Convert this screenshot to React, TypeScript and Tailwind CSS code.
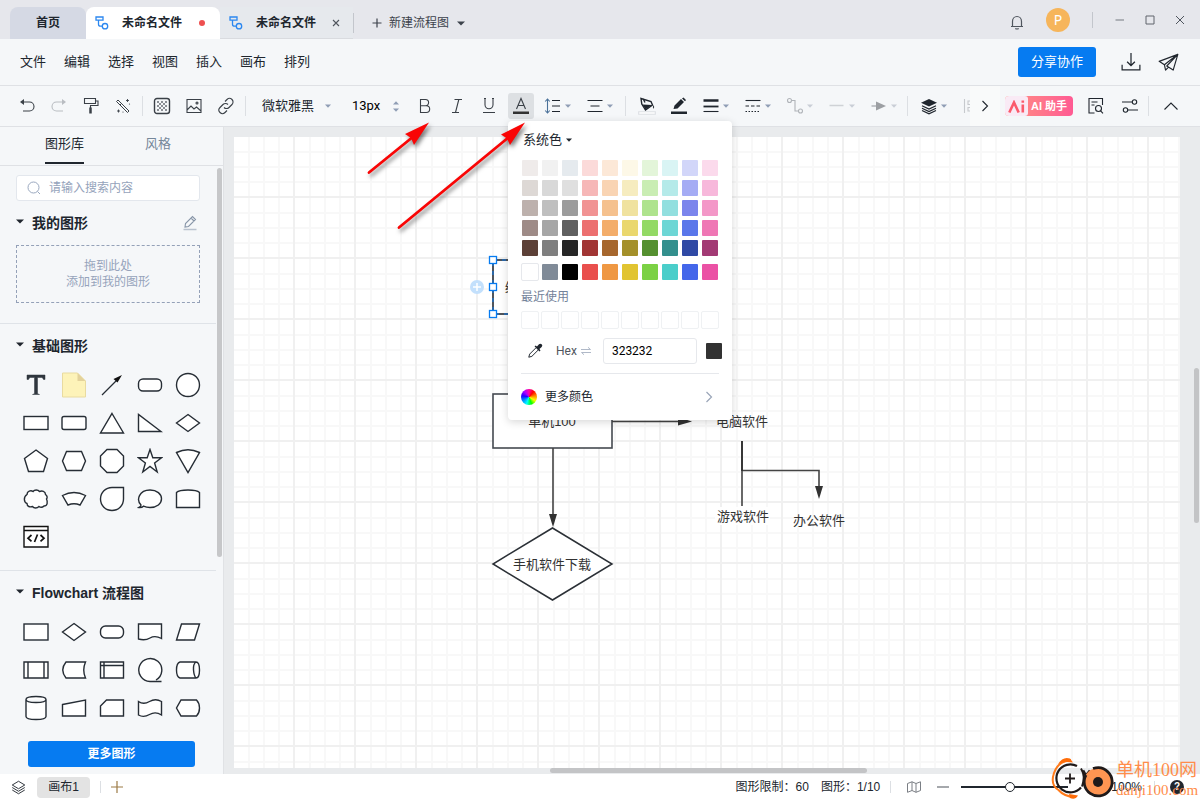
import React, { useState } from 'react';
import clsx from 'clsx';

interface IconProps {
  children: React.ReactNode;
  size?: number;
  className?: string;
}

// Toolbar icons are all drawn on an 18px box
function Icon({ children, size = 18, className }: IconProps) {
  return (
    <svg
      width={size}
      height={size}
      viewBox="0 0 18 18"
      fill="none"
      stroke="currentColor"
      strokeWidth="1.1"
      className={clsx('shrink-0', className)}
      aria-hidden="true"
    >
      {children}
    </svg>
  );
}

function Caret({ className }: { className?: string }) {
  return (
    <svg width="6" height="4" viewBox="0 0 6 4" className={clsx('shrink-0', className)} aria-hidden="true">
      <path d="M0 0.5h6L3 3.8z" fill="currentColor" />
    </svg>
  );
}

function Divider({ className }: { className?: string }) {
  return <div className={clsx('w-px shrink-0', className)} />;
}

interface ToolProps {
  label: string;
  children: React.ReactNode;
  disabled?: boolean;
}

function Tool({ label, children, disabled }: ToolProps) {
  return (
    <button
      aria-label={label}
      disabled={disabled}
      className={clsx('flex items-center justify-center w-8 h-8 shrink-0', disabled ? 'text-[#b9bdc2]' : 'text-[#3a4047]')}
    >
      {children}
    </button>
  );
}

function MenuTool({ label, children, disabled }: ToolProps) {
  return (
    <button
      aria-label={label}
      disabled={disabled}
      className={clsx('flex items-center gap-[3px] shrink-0', disabled ? 'text-[#b0b4b9]' : 'text-[#20262e]')}
    >
      <Icon>{children}</Icon>
      <Caret className={disabled ? 'text-[#c9ced6]' : 'text-[#8f9db5]'} />
    </button>
  );
}

function FlowIcon() {
  return (
    <svg width="14" height="14" viewBox="0 0 14 14" fill="none" stroke="#2b87f0" strokeWidth="1.3" aria-hidden="true">
      <path d="M1 1h7v3.200H1zM3.500 4.200v4q0 2 2 2h1.500" />
      <circle cx="10" cy="10.200" r="2.700" />
    </svg>
  );
}

function TitleBar() {
  return (
    <header className="flex items-end h-[39px] shrink-0 bg-[#e6e7ec] pl-[10px] text-xs text-[#20262e]">
      <button className="w-[76px] h-8 rounded-t-lg bg-[#d5d9e4] font-bold">首页</button>
      <div className="flex items-center w-[134px] h-8 rounded-t-lg bg-white pl-[9px] font-bold">
        <FlowIcon />
        <span className="ml-[13px]">未命名文件</span>
        <span className="ml-[17px] w-[6px] h-[6px] rounded-full bg-[#ee5050]" />
      </div>
      <div className="flex items-center w-[133px] h-8 bg-[#e6e9ed] pl-[9px] font-bold border-b border-[#d9dbdf]">
        <FlowIcon />
        <span className="ml-[13px]">未命名文件</span>
        <button aria-label="关闭" className="ml-4 text-[#50565e]">
          <svg width="8" height="8" viewBox="0 0 8 8" stroke="currentColor" strokeWidth="1.1">
            <path d="M1 1l6 6M7 1L1 7" />
          </svg>
        </button>
      </div>
      <Divider className="h-5 mb-[6px] bg-[#c3c6cc]" />
      <button className="flex items-center h-8 ml-[18px] text-[#3c424b]">
        <svg width="10" height="10" viewBox="0 0 10 10" stroke="currentColor" strokeWidth="1.2">
          <path d="M5 0.500v9M0.500 5h9" />
        </svg>
        <span className="ml-[7px]">新建流程图</span>
        <svg width="8" height="5" viewBox="0 0 8 5" className="ml-2" aria-hidden="true">
          <path d="M0 0.500h8L4 4.500z" fill="currentColor" />
        </svg>
      </button>
      <div className="flex items-center h-full ml-auto pr-[15px]">
        <button aria-label="通知" className="mt-[5px] text-[#50565e]">
          <svg width="14" height="15" viewBox="0 0 14 15" fill="none" stroke="currentColor" strokeWidth="1.2">
            <path d="M1 11.500h12M2.500 11.300V6.500C2.500 3.500 4.500 1.500 7 1.500s4.500 2 4.500 5v4.800M5.300 13.500q1.700 1 3.400 0" />
          </svg>
        </button>
        <span className="flex items-center justify-center w-6 h-6 ml-[22px] rounded-full bg-[#f6b55b] text-white text-sm font-['Noto_Sans']">P</span>
        <Divider className="ml-[22px] h-4 bg-[#c3c6cc]" />
        <button aria-label="最小化" className="ml-[22px] text-[#9a9ea5]">
          <svg width="10" height="10" viewBox="0 0 10 10" stroke="currentColor" strokeWidth="1.500"><path d="M0.500 5h8.500" /></svg>
        </button>
        <button aria-label="最大化" className="ml-5 text-[#60656c]">
          <svg width="10" height="10" viewBox="0 0 10 10" fill="none" stroke="currentColor"><path d="M1 1h8v8H1z" /></svg>
        </button>
        <button aria-label="关闭窗口" className="ml-5 text-[#50565e]">
          <svg width="10" height="10" viewBox="0 0 10 10" stroke="currentColor"><path d="M1 1l8 8M9 1L1 9" /></svg>
        </button>
      </div>
    </header>
  );
}

const menus = ['文件', '编辑', '选择', '视图', '插入', '画布', '排列'];

function MenuBar() {
  return (
    <nav className="flex items-center h-[47px] shrink-0 bg-[#f5f7f9] border-b border-[#dfe1e5] pl-5 pr-[21px] text-[13px] text-[#20262e]">
      <div className="flex gap-[18px]">
        {menus.map((menu) => (
          <button key={menu}>{menu}</button>
        ))}
      </div>
      <button className="ml-auto w-[78px] h-[30px] rounded-[3px] bg-[#067bf1] text-white">分享协作</button>
      <button aria-label="下载" className="ml-[25px]">
        <Icon size={20}>
          <path d="M1 11.500v4.500h16v-4.500M9 1v11M5.500 8.800L9 12.200l3.500-3.400" />
        </Icon>
      </button>
      <button aria-label="发送" className="ml-[17px]">
        <Icon size={21}>
          <path d="M17 2L1 8l4.500 3L17 2zM5.500 11L6.500 15.500l2.500-2.500M17 2l-4 13.500L7.500 12 17 2" strokeWidth="1" strokeLinejoin="round" />
        </Icon>
      </button>
    </nav>
  );
}

function Toolbar() {
  const [fontSize, setFontSize] = useState('13px');

  return (
    <div className="flex h-[41px] shrink-0 bg-[#f5f7f9] border-b border-[#dfe1e5] text-[#20262e]">
      <div className="flex flex-1 min-w-0 items-center overflow-hidden pl-[11px]">
        <Tool label="撤销">
          <Icon>
            <path d="M4 5h7.500a4.500 4.500 0 0 1 0 9H5" />
            <path d="M2 5l4-3v6z" fill="currentColor" stroke="none" />
          </Icon>
        </Tool>
        <Tool label="重做" disabled>
          <Icon>
            <path d="M14 5H6.500a4.500 4.500 0 0 0 0 9H13" />
            <path d="M16 5l-4-3v6z" fill="currentColor" stroke="none" />
          </Icon>
        </Tool>
        <Tool label="格式刷">
          <Icon>
            <path d="M2.500 1.500h11v5h-11zM13.500 4H16v4.500H8.500V11" />
            <path d="M8.500 10.500v6" strokeWidth="2.500" />
          </Icon>
        </Tool>
        <Tool label="一键美化">
          <Icon>
            <path d="M2.500 4.500L4 3l11 11-1.500 1.500zM6 8l1.500-1.500" strokeWidth="1" />
            <path d="M13.500 2v3M12 3.500h3M4.500 12.500v3M3 14h3" strokeWidth="0.900" />
            <circle cx="15.500" cy="7" r="0.600" fill="currentColor" stroke="none" />
            <circle cx="9" cy="15" r="0.600" fill="currentColor" stroke="none" />
          </Icon>
        </Tool>
        <Divider className="h-5 mx-[3px] bg-[#dcdfe3]" />
        <Tool label="背景">
          <Icon>
            <rect x="1.500" y="1.500" width="15" height="15" rx="2.500" strokeWidth="1.400" />
            <path
              d="M4 4h2v2H4zM8 4h2v2H8zM12 4h2v2h-2zM6 6h2v2H6zM10 6h2v2h-2zM4 8h2v2H4zM8 8h2v2H8zM12 8h2v2h-2zM6 10h2v2H6zM10 10h2v2h-2zM4 12h2v2H4zM8 12h2v2H8zM12 12h2v2h-2z"
              fill="#8b8f95"
              stroke="none"
            />
          </Icon>
        </Tool>
        <Tool label="图片">
          <Icon>
            <path d="M2 2.500h14v13H2zM2 13l4-4 3 3 2.500-2 4.500 4" />
            <circle cx="12" cy="6" r="1" />
          </Icon>
        </Tool>
        <Tool label="链接">
          <Icon>
            <path d="M8 4.500l2-2a3.500 3.500 0 0 1 5 5l-3 3a3.500 3.500 0 0 1-5 0" />
            <path d="M10 13.500l-2 2a3.500 3.500 0 0 1-5-5l3-3a3.500 3.500 0 0 1 5 0" />
          </Icon>
        </Tool>
        <Divider className="h-5 mx-[3px] bg-[#dcdfe3]" />
        <div className="flex items-center shrink-0 ml-[13px] w-[71px]">
          <select aria-label="字体" className="appearance-none w-[63px] shrink-0 bg-transparent text-[13px] outline-none">
            <option>微软雅黑</option>
          </select>
          <Caret className="text-[#8f9db5]" />
        </div>
        <input
          aria-label="字号"
          value={fontSize}
          onChange={(e) => setFontSize(e.target.value)}
          className="ml-[19px] w-[41px] shrink-0 bg-transparent text-[13px] text-black font-['Roboto','Noto_Sans_CJK_SC',sans-serif] outline-none"
        />
        <div className="flex flex-col gap-[3px] shrink-0 mr-[10px]">
          <button aria-label="增大字号" className="text-[#8f9db5]"><Caret className="block rotate-180" /></button>
          <button aria-label="减小字号" className="text-[#8f9db5]"><Caret className="block" /></button>
        </div>
        <Tool label="加粗">
          <Icon>
            <path d="M4.500 2.500h5a3 3 0 0 1 0 6.200h-5zM4.500 8.700h5.800a3.400 3.400 0 0 1 0 6.800H4.500z" />
          </Icon>
        </Tool>
        <Tool label="斜体">
          <Icon><path d="M6.500 2.500h7.500M4 15.500h7M10.800 2.500l-3.300 13" /></Icon>
        </Tool>
        <Tool label="下划线">
          <Icon><path d="M5 1.500v6.300a4 4 0 0 0 8 0V1.500M4 1.500h2M12 1.500h2M3 15.500h12" /></Icon>
        </Tool>
        <Tool label="文字颜色">
          <span className="flex items-center justify-center w-[26px] h-[26px] rounded-[3px] bg-[#dde0e3]">
            <Icon>
              <path d="M4.500 12L9 1.500 13.500 12M6 8.500h6" />
              <path d="M1 14.500h16v2.500H1z" fill="#323232" stroke="none" />
            </Icon>
          </span>
        </Tool>
        <div className="flex items-center gap-[15px] ml-[7px] mr-3">
          <MenuTool label="行距">
            <path d="M3.500 2v14M1.200 4.500L3.500 2l2.300 2.500M1.200 13.500L3.500 16l2.300-2.500" stroke="#4a7199" />
            <path d="M8 3.500h8M8 9h8M8 14.500h8" />
          </MenuTool>
          <MenuTool label="对齐">
            <path d="M1.500 3.500h15M4.500 9h9M1.500 14.500h15" />
          </MenuTool>
        </div>
        <Divider className="h-5 mr-3 bg-[#dcdfe3]" />
        <button aria-label="填充" className="shrink-0">
          <Icon>
            <path d="M3 1.500l10 3 1.500 3.500-7 5L3.800 7zM5 1.500l2 4" strokeWidth="1.400" />
            <path d="M4.500 7.500l9.500 0.500-6.500 4.500z" fill="currentColor" stroke="none" />
            <path d="M15.500 8q1.500 2.500 0 4-1.500-1.500 0-4z" fill="currentColor" stroke="none" />
            <path d="M0.700 14.700h16.600v2.600H0.700z" fill="#fff" stroke="#dcdfe3" />
          </Icon>
        </button>
        <button aria-label="线条颜色" className="ml-[14px] shrink-0">
          <Icon>
            <path d="M3.500 12l1-3.500L11 2l3 3-6.500 6.500zM12 1.500l1.500-1 2.500 2.500-1 1.200z" fill="currentColor" stroke="none" />
            <path d="M1 14.500h16v2.500H1z" fill="currentColor" stroke="none" />
          </Icon>
        </button>
        <div className="flex items-center gap-[15px] ml-[14px] mr-[10px]">
          <MenuTool label="线宽">
            <path d="M1.500 3.500h15" strokeWidth="2.500" />
            <path d="M1.500 9.500h15" strokeWidth="1.800" />
            <path d="M1.500 14.500h15" />
          </MenuTool>
          <MenuTool label="线型">
            <path d="M1.500 3.500h15" />
            <path d="M1.500 9h15" strokeDasharray="3.500 2" />
            <path d="M1.500 14.500h15" strokeDasharray="1.500 1.500" />
          </MenuTool>
          <MenuTool label="连线类型" disabled>
            <circle cx="3.500" cy="3.500" r="2" />
            <circle cx="14.500" cy="14" r="2" />
            <path d="M5.500 3.500H9V14h3.500" />
          </MenuTool>
          <MenuTool label="起点" disabled>
            <path d="M1.500 8.500h14" stroke="#cfd2d6" strokeWidth="1.500" />
          </MenuTool>
          <MenuTool label="终点" disabled>
            <path d="M1.500 9h5" strokeWidth="1.500" />
            <path d="M6 4.500L16 9 6 13.500z" fill="#9c9fa3" stroke="none" />
          </MenuTool>
        </div>
        <Divider className="h-5 mr-3 bg-[#dcdfe3]" />
        <MenuTool label="图层">
          <path d="M9 2l8 3.700-8 3.800-8-3.800z" fill="currentColor" stroke="none" />
          <path d="M2 8.700l7 3.300 7-3.300M2 11.200l7 3.300 7-3.300M2 13.500l7 3.300 7-3.300" strokeWidth="1.200" />
        </MenuTool>
        <Icon className="ml-4 text-[#c6c9cd]"><path d="M1.500 2v14M5 4h3v3.500H5zM5 10.500h7v3.500H5z" /></Icon>
      </div>
      <button aria-label="更多工具" className="flex items-center justify-center w-[30px] shrink-0 bg-[#f9fafa]">
        <svg width="8" height="12" viewBox="0 0 8 12" fill="none" stroke="currentColor" strokeWidth="1.100"><path d="M1.500 1l5 5-5 5" /></svg>
      </button>
      <div className="flex items-center shrink-0 pl-[5px] pr-[21px]">
        <button className="flex items-center w-[68px] h-5 rounded bg-gradient-to-r from-[#ff9180] to-[#ff5a93] text-[11px] font-bold text-white overflow-hidden">
          <span className="flex items-center justify-center w-[23px] h-5 rounded-r-[3px] bg-[#f9eaf5]">
            <svg width="17" height="13" viewBox="0 0 17 13" fill="none" stroke="#fb5a6c" strokeWidth="2.600" aria-hidden="true">
              <path d="M1.300 12.500L6 2.500l4.700 10" />
              <path d="M14.800 4.500v8M14.800 0.500v2.200" />
            </svg>
          </span>
          <span className="ml-[3px] whitespace-nowrap">AI 助手</span>
        </button>
        <button aria-label="查找" className="ml-[14px]">
          <Icon>
            <path d="M7.500 16H2V1.500h13.500V8M4.500 5h6M4.500 8h3" />
            <circle cx="11.500" cy="11.500" r="3" />
            <path d="M13.600 13.800L16 16.300" />
          </Icon>
        </button>
        <button aria-label="设置" className="ml-4">
          <Icon>
            <circle cx="13.500" cy="5" r="2.200" />
            <circle cx="4.500" cy="13" r="2.200" />
            <path d="M1 5h10.300M6.700 13H17" />
          </Icon>
        </button>
        <Divider className="h-5 ml-[9px] bg-[#dcdfe3]" />
        <button aria-label="收起" className="ml-[14px]">
          <svg width="16" height="10" viewBox="0 0 16 10" fill="none" stroke="currentColor" strokeWidth="1.100"><path d="M1.500 8.500L8 2l6.500 6.500" /></svg>
        </button>
      </div>
    </div>
  );
}

interface Shape {
  name: string;
  draw: React.ReactNode;
}

// Each shape is centred on 0,0 inside a 26px box
const basicShapes: Shape[] = [
  {
    name: '文本',
    draw: <path d="M-9-10H9v4.500H7.500q-.5-2-2-2H1.500V8q0 1.500 2 1.500H-3.500q2 0 2-1.500V-7.500h-4q-1.500 0-2 2H-9z" fill="#2f363e" stroke="#2f363e" strokeWidth="0.500" />,
  },
  {
    name: '便签',
    draw: (
      <>
        <path d="M-11.500-12H3.500l8 8v16h-23z" fill="#fdf3b9" stroke="#e9dba0" strokeWidth="1" />
        <path d="M3.500-12l8 8h-8z" fill="#e3d29b" stroke="none" />
      </>
    ),
  },
  {
    name: '箭头',
    draw: (
      <>
        <path d="M-10 10L5-5" strokeWidth="1.200" />
        <path d="M10-10L5.500-2.500l-4-3.500z" fill="#111" stroke="none" />
      </>
    ),
  },
  { name: '圆角矩形', draw: <rect x="-11.500" y="-6" width="23" height="12" rx="4.500" /> },
  { name: '圆形', draw: <circle r="11.500" /> },
  { name: '矩形', draw: <rect x="-12" y="-6.500" width="24" height="13" /> },
  { name: '圆角', draw: <rect x="-12" y="-6.500" width="24" height="13" rx="2" /> },
  { name: '三角形', draw: <path d="M0-9.500L11.500 10h-23z" /> },
  { name: '直角三角形', draw: <path d="M-11.500-8.500V8.500H11z" /> },
  { name: '菱形', draw: <path d="M0-8.500L11.500 0 0 8.500-11.500 0z" /> },
  { name: '五边形', draw: <path d="M0-11L11.500-2.500 7.500 10.500h-15L-11.500-2.500z" /> },
  { name: '六边形', draw: <path d="M-7.500-9.500h15L11.500 0 7.500 9.500h-15L-11.500 0z" /> },
  { name: '八边形', draw: <path d="M-5-11.500H5L11.500-5V5L5 11.500H-5L-11.500 5V-5z" /> },
  {
    name: '星形',
    draw: <path d="M0-11.500L2.800-3.300h8.700L4.600 2 7.200 11 0 5.500-7.200 11-4.600 2l-6.900-5.300h8.700z" />,
  },
  { name: '扇形', draw: <path d="M-11.500-8.500Q0-14 11.500-8.500L0 11.500z" /> },
  {
    name: '云',
    draw: (
      <path d="M-9-4.500C-9-8-5-9-3-7.500-1.500-9.500 2-9.500 3.500-7.500 6-8.500 9.500-8 9.500-4.500 11.500-3 11.500-1 10.500 0 12 3 11.500 7 8 7 6.500 8.500 4.500 8.500 3 7.500 1 9.500-2 9.500-3.500 7.500-6 8.500-9 7.500-9 4.500-12 3.500-13-2-9-4.500z" />
    ),
  },
  { name: '弧形', draw: <path d="M-11.500-3.500Q0-9.500 11.500-3.500L6 6Q0 3.500-6 6z" /> },
  { name: '水滴', draw: <path d="M0-11.500h11.500V0A11.500 11.500 0 1 1 0-11.500z" /> },
  { name: '气泡', draw: <path d="M-11 8.500q2-1 2-2.500C-14 1-11-9 0-9c7 0 11.500 4 11.500 8.800S7 8.500 0 8.500q-3.500 0-6.500-1.300-1.500 1.500-4.500 1.300z" /> },
  { name: '拱形', draw: <path d="M-11.500 8.500V-6.500Q-9-9 0-9t11.500 2.500V8.500z" /> },
  {
    name: '代码',
    draw: (
      <>
        <path d="M-12-10.500h24v20.500h-24zM-12-6.500h24" stroke="#111" />
        <path d="M-4.500-2L-8 1.200l3.500 3.200M4.500-2L8 1.200 4.500 4.400M1.500-2.500l-3 7.500" fill="none" stroke="#111" strokeWidth="1.700" />
      </>
    ),
  },
];

const flowShapes: Shape[] = [
  { name: '流程', draw: <rect x="-12" y="-8" width="24" height="16" /> },
  { name: '判定', draw: <path d="M0-8.500L11.500 0 0 8.500-11.500 0z" /> },
  { name: '开始', draw: <rect x="-11.500" y="-6" width="23" height="12" rx="5" /> },
  { name: '文档', draw: <path d="M-11.500-8h23V6.500Q5 3 0 6t-11.500 1z" /> },
  { name: '数据', draw: <path d="M-6.500-8h18l-5 16h-18z" /> },
  { name: '子流程', draw: <path d="M-12-8h24V8h-24zM-8-8V8M8-8V8" /> },
  { name: '存储数据', draw: <path d="M-8-8H11.500Q8 0 11.500 8H-8q-6.500-8 0-16z" /> },
  { name: '内部存储', draw: <path d="M-11.500-8h23V8h-23zM-8-8V8M-11.500-4.500h23" /> },
  { name: '顺序数据', draw: <path d="M0 11.500A11.500 11.500 0 1 1 6 10M0 11.500h11.500" /> },
  { name: '直接数据', draw: <path d="M-8-8H8Q11.500-8 11.500 0T8 8H-8Q-11.500 7-11.500 0T-8-8zM8-8Q5-6 5.500 0T8 8" /> },
  { name: '数据库', draw: <path d="M-10-8.500Q-10-11.500 0-11.500T10-8.500V8.500Q10 11.500 0 11.500T-10 8.500zQ-10-5.500 0-5.500T10-8.500" /> },
  { name: '手动输入', draw: <path d="M-11.500-3.500L11.500-8V8h-23z" /> },
  { name: '卡片', draw: <path d="M-5.500-8h17V8h-23V-2z" /> },
  { name: '纸带', draw: <path d="M-11.500-6.500q5 3.500 11 0t12 0V7q-6-4-12-.5T-11.500 7z" /> },
  { name: '显示', draw: <path d="M-7-8H8.500q3 3 3 8t-3 8H-7L-11.500 0z" /> },
];

function ShapeGrid({ shapes }: { shapes: Shape[] }) {
  return (
    <div className="grid grid-cols-[repeat(5,38px)] auto-rows-[38px] mt-[10px] pl-[17px]">
      {shapes.map((shape) => (
        <button key={shape.name} aria-label={shape.name} className="flex items-center justify-center">
          <svg width="26" height="26" viewBox="-13 -13 26 26" fill="#fff" stroke="#262d35" strokeWidth="1.400">
            {shape.draw}
          </svg>
        </button>
      ))}
    </div>
  );
}

function SectionTitle({ title, children }: { title: string; children?: React.ReactNode }) {
  return (
    <div className="flex items-center h-5 mt-3 pl-4 pr-[19px] text-[#20262e]">
      <svg width="8" height="5" viewBox="0 0 8 5" className="mb-1" aria-hidden="true">
        <path d="M0 0.500h8L4 4.500z" fill="currentColor" />
      </svg>
      <h2 className="ml-2 text-sm font-bold">{title}</h2>
      {children}
    </div>
  );
}

function Sidebar() {
  return (
    <aside className="flex flex-col w-56 shrink-0 bg-[#f5f7f9] border-r border-[#e0e2e5]">
      <div className="flex h-[39px] shrink-0 border-b border-[#dfe1e5] pl-[45px] gap-[61px] text-[13px]">
        <button className="h-[37px] pb-[2px] border-b-2 border-[#20262e] text-[#20262e]">图形库</button>
        <button className="h-[37px] pb-[2px] border-b-2 border-transparent text-[#75879a]">风格</button>
      </div>
      <div className="flex flex-1 min-h-0">
        <div className="flex flex-col w-[216px]">
          <label className="flex items-center h-[26px] shrink-0 mt-[9px] mx-4 px-[10px] rounded-[3px] bg-white border border-[#e3e7ed]">
            <svg width="14" height="14" viewBox="0 0 14 14" fill="none" stroke="#9aa8bf" className="shrink-0" aria-hidden="true">
              <circle cx="6.500" cy="6.500" r="5.500" />
              <path d="M10.500 10.500l2.500 2.500" />
            </svg>
            <input
              type="text"
              aria-label="搜索"
              placeholder="请输入搜索内容"
              className="ml-2 w-full min-w-0 text-xs outline-none placeholder:text-[#95a3bb]"
            />
          </label>
          <SectionTitle title="我的图形">
            <button aria-label="编辑我的图形" className="ml-auto text-[#8795a8]">
              <svg width="14" height="16" viewBox="0 0 14 16" fill="none" stroke="currentColor" strokeWidth="1.100">
                <path d="M2 12l.5-3.500L9.500 1.500l3 3-7 7zM8 3l3 3" />
                <path d="M0.500 14.500h13" strokeWidth="1.500" stroke="#b9c2cf" />
              </svg>
            </button>
          </SectionTitle>
          <div className="flex items-center justify-center h-[58px] shrink-0 mt-3 mx-4 border border-dashed border-[#94a1b8] text-center text-xs text-[#95a3bb]">
            拖到此处
            <br />
            添加到我的图形
          </div>
          <div className="mt-5 border-t border-[#dfe3e8]">
            <SectionTitle title="基础图形" />
            <ShapeGrid shapes={basicShapes} />
          </div>
          <div className="mt-[14px] border-t border-[#dfe3e8]">
            <SectionTitle title="Flowchart 流程图" />
            <ShapeGrid shapes={flowShapes} />
          </div>
          <button className="h-[26px] shrink-0 mt-[14px] ml-7 mr-[21px] rounded-[3px] bg-[#067bf1] text-xs font-bold text-white">
            更多图形
          </button>
        </div>
        <div className="w-[5px] h-[389px] mt-[2px] ml-px rounded-full bg-[#c6c7c9]" />
      </div>
    </aside>
  );
}

function Diagram() {
  return (
    <svg className="block w-full h-full bg-white" fill="none">
      <defs>
        <pattern id="grid" width="61" height="61" patternUnits="userSpaceOnUse">
          <path d="M15 0v61M30 0v61M45 0v61M0 15h61M0 30h61M0 45h61" stroke="#f8f8f8" strokeWidth="2" />
          <path d="M60 0v61M0 60h61" stroke="#f0f0f0" strokeWidth="2" />
        </pattern>
      </defs>
      <rect width="100%" height="100%" fill="url(#grid)" />
      <g transform="translate(-234 -137)">
        {/* selected node */}
        <rect x="493" y="260" width="120" height="54" fill="#fff" stroke="#50555c" strokeWidth="2" />
        <rect x="493" y="260" width="120" height="54" stroke="#0a7cf0" strokeDasharray="4 5" />
        <text x="505" y="292" fontSize="13" fill="#323232">绘</text>
        <g fill="#fff" stroke="#067bf1" strokeWidth="1.300">
          <rect x="489.500" y="256.500" width="7" height="7" />
          <rect x="489.500" y="283.500" width="7" height="7" />
          <rect x="489.500" y="310.500" width="7" height="7" />
        </g>
        <circle cx="477" cy="287" r="7" fill="#c3e0fc" />
        <path d="M477 283v8M473 287h8" stroke="#fff" strokeWidth="1.500" />

        <rect x="493" y="394" width="119" height="54" fill="#fff" stroke="#454a51" strokeWidth="1.600" />
        <path d="M552.500 528L612 564l-59.500 36L493 564z" fill="#fff" stroke="#2b3036" strokeWidth="1.500" />
        <g stroke="#444" strokeWidth="1.600">
          <path d="M612 421.500h67M553 448v67M742 441v65M742 470.500h77V487" />
          <path d="M742 441v30" stroke="#2b2b2b" />
        </g>
        <g fill="#323232">
          <path d="M678 417l14 4.500-14 4z" />
          <path d="M549 514h8l-4 13z" />
          <path d="M815 486h8l-4 13z" />
        </g>
        <rect x="715" y="507" width="55" height="18" fill="#fff" />
        <g fontSize="13" fill="#323232" textAnchor="middle">
          <text x="552" y="426">单机100</text>
          <text x="552" y="569">手机软件下载</text>
          <text x="742" y="426">电脑软件</text>
          <text x="743" y="521">游戏软件</text>
          <text x="819" y="525">办公软件</text>
        </g>
      </g>
    </svg>
  );
}

function Canvas() {
  return (
    <main className="flex flex-col flex-1 min-w-0 bg-[#e9ebed] pt-[10px] pl-[10px]">
      <div className="flex flex-1 min-h-0">
        <div className="flex-1 min-w-0 overflow-hidden">
          <Diagram />
        </div>
        <div className="w-[5px] h-[155px] mt-[231px] ml-[14px] mr-px rounded-full bg-[#c3c4c6]" />
      </div>
      <div className="h-[6px] shrink-0 pl-[316px]">
        <div className="w-[317px] h-[5px] rounded-full bg-[#c3c4c6]" />
      </div>
    </main>
  );
}

const palette = [
  ['bg-[#efebea]', 'bg-[#f1f1f1]', 'bg-[#e5eaee]', 'bg-[#fbdad9]', 'bg-[#fce8d7]', 'bg-[#fdf8e7]', 'bg-[#e3f5d9]', 'bg-[#d9f4f4]', 'bg-[#d2d6f9]', 'bg-[#fbdaec]'],
  ['bg-[#ddd8d5]', 'bg-[#d8d8d8]', 'bg-[#dfdfdf]', 'bg-[#f6b7b7]', 'bg-[#f9d4b3]', 'bg-[#f6ecbf]', 'bg-[#c9edb3]', 'bg-[#b5eae9]', 'bg-[#a5acf4]', 'bg-[#f7b8db]'],
  ['bg-[#bdb1ad]', 'bg-[#bfbfbf]', 'bg-[#9c9c9c]', 'bg-[#f19393]', 'bg-[#f5c18e]', 'bg-[#f0e29f]', 'bg-[#aee38d]', 'bg-[#92dfdf]', 'bg-[#7b85ec]', 'bg-[#f398c8]'],
  ['bg-[#9e8b87]', 'bg-[#a6a6a6]', 'bg-[#606060]', 'bg-[#ec7070]', 'bg-[#f3ad6a]', 'bg-[#ead76e]', 'bg-[#93d965]', 'bg-[#6dd6d5]', 'bg-[#5a77ea]', 'bg-[#ef77b5]'],
  ['bg-[#5c4037]', 'bg-[#7f7f7f]', 'bg-[#262626]', 'bg-[#a13534]', 'bg-[#a6672d]', 'bg-[#a4902a]', 'bg-[#559030]', 'bg-[#338f8d]', 'bg-[#2f49a5]', 'bg-[#a23a74]'],
];

const standardColors = [
  'bg-white outline outline-[#e6e8ec]', 'bg-[#808b98]', 'bg-black', 'bg-[#e94f4d]', 'bg-[#ef9843]',
  'bg-[#e1c431]', 'bg-[#7bd144]', 'bg-[#4aceca]', 'bg-[#4467ea]', 'bg-[#eb51a5]',
];

function Swatches({ colors }: { colors: string[] }) {
  return (
    <div className="flex gap-1">
      {colors.map((color) => (
        <button key={color} aria-label="颜色" className={clsx('w-4 h-4 rounded-[1px]', color)} />
      ))}
    </div>
  );
}

function ColorPopover() {
  const [hex, setHex] = useState('323232');

  return (
    <div className="absolute left-[508px] top-[121px] z-10 flex flex-col w-[224px] rounded bg-white px-[13px] shadow-[0_2px_8px_rgba(0,0,0,0.16)] text-xs text-[#20262e]">
      <button className="flex items-center gap-1 h-5 mt-[9px] ml-[2px] text-[13px]">
        系统色
        <Caret />
      </button>
      <div className="flex flex-col gap-1 mt-[10px] ml-px">
        {palette.map((row) => (
          <Swatches key={row[0]} colors={row} />
        ))}
        <div className="mt-1">
          <Swatches colors={standardColors} />
        </div>
      </div>
      <div className="mt-[9px] leading-4 text-[#74839a]">最近使用</div>
      <div className="flex gap-[2px] mt-[6px]">
        {standardColors.map((color) => (
          <div key={color} className="w-[18px] h-[18px] shrink-0 rounded-[2px] border border-[#eff1f3]" />
        ))}
      </div>
      <div className="flex items-center h-[26px] mt-[9px] pl-[6px] -mr-1">
        <button aria-label="吸管">
          <Icon size={16}>
            <path d="M10 5.500l-7 7L2 16l3.500-1 7-7" />
            <path d="M8.500 4l1.200-1.200 1.500 1.200L13.500 1.500a2 2 0 0 1 3 3L14 6.800l1.200 1.500L14 9.500z" fill="currentColor" stroke="none" />
          </Icon>
        </button>
        <label htmlFor="hex" className="ml-[13px] font-['Roboto',sans-serif] text-[#50565e]">Hex</label>
        <svg width="10" height="8" viewBox="0 0 10 8" fill="none" stroke="#b0b9c8" className="ml-1 shrink-0" aria-hidden="true">
          <path d="M0 2.500h9.500L7 0.300M10 5.500H0.500L3 7.700" />
        </svg>
        <input
          id="hex"
          value={hex}
          onChange={(e) => setHex(e.target.value)}
          className="ml-3 w-[94px] h-[26px] shrink-0 rounded-[3px] border border-[#e6e8ec] px-2 text-black font-['Roboto',sans-serif] outline-none"
        />
        <span className="w-4 h-4 ml-[9px] shrink-0 rounded-[1px] bg-[#323232]" />
      </div>
      <div className="mt-[9px] h-px shrink-0 bg-[#e6e8ec]" />
      <button className="flex items-center h-[46px] pr-[6px]">
        <span className="w-4 h-4 rounded-full bg-[conic-gradient(#f0a,#f00,#f80,#ff0,#0f0,#0ff,#08f,#20f,#a0f,#f0a)]" />
        <span className="ml-2">更多颜色</span>
        <svg width="8" height="12" viewBox="0 0 8 12" fill="none" stroke="#9aa5b8" strokeWidth="1.200" className="ml-auto">
          <path d="M1.500 1l5 5-5 5" />
        </svg>
      </button>
    </div>
  );
}

function StatusBar() {
  return (
    <footer className="flex items-center h-[26px] shrink-0 bg-white pl-[11px] pr-4 text-xs text-[#20262e] whitespace-nowrap">
      <button aria-label="图层">
        <Icon size={15}>
          <path d="M9 1.500l7.500 4.500L9 10.500 1.500 6zM1.500 9L9 13.500 16.500 9M1.500 12L9 16.500l7.500-4.500" />
        </Icon>
      </button>
      <button className="w-[53px] h-[21px] ml-[11px] rounded bg-[#e3e3e3]">画布1</button>
      <Divider className="h-3 ml-[10px] bg-[#dcdfe3]" />
      <button aria-label="新建画布" className="ml-[10px] text-[#9c7a45]">
        <svg width="12" height="12" viewBox="0 0 12 12" stroke="currentColor" strokeWidth="1.200"><path d="M6 0v12M0 6h12" /></svg>
      </button>
      <span className="ml-auto">图形限制：60</span>
      <span className="ml-3">图形：1/10</span>
      <Divider className="h-3 ml-[10px] bg-[#dcdfe3]" />
      <button aria-label="导航图" className="ml-4 text-[#7b7f85]">
        <svg width="14" height="12" viewBox="0 0 14 12" fill="none" stroke="currentColor">
          <path d="M0.500 2.500L5 .8l4 1.700L13.500 .8v8.700L9 11.300 5 9.500 0.500 11.300zM5 .8v8.700M9 2.500v8.800" />
        </svg>
      </button>
      <button aria-label="缩小" className="ml-4 text-[#8e9297]">
        <svg width="12" height="12" viewBox="0 0 12 12" stroke="currentColor" strokeWidth="1.600"><path d="M0 6h12" /></svg>
      </button>
      <input
        type="range"
        aria-label="缩放"
        defaultValue={45}
        className="ml-3 w-[107px] h-[2px] appearance-none bg-[#20262e] [&::-webkit-slider-thumb]:appearance-none [&::-webkit-slider-thumb]:w-[10px] [&::-webkit-slider-thumb]:h-[10px] [&::-webkit-slider-thumb]:rounded-full [&::-webkit-slider-thumb]:bg-white [&::-webkit-slider-thumb]:border [&::-webkit-slider-thumb]:border-[#20262e]"
      />
      <span className="ml-[43px]">100%</span>
      <Divider className="h-3 ml-3 bg-[#dcdfe3]" />
      <button aria-label="帮助" className="flex items-center justify-center w-[14px] h-[14px] ml-[15px] rounded-full bg-[#20262e] text-[10px] font-bold text-white">
        ?
      </button>
    </footer>
  );
}

function Watermark() {
  return (
    <div className="absolute right-[2px] bottom-0 z-20 flex items-end pointer-events-none text-[#ff8d4a]">
      <svg width="66" height="44" viewBox="0 0 66 44" fill="none" aria-hidden="true">
        <path d="M21 4Q8 5 4 17t4.500 17q6 7 17 7" stroke="#ff7a1a" strokeWidth="2" />
        <path d="M8 8q5-8 12-5.500l3 4Q14 5 8 8zM19 38l9 1.500q-3 5-8 2.500z" fill="#ff6d0a" />
        <path d="M27 10a14 14 0 1 0 4 21.500" stroke="#201a1a" strokeWidth="2.200" />
        <path d="M31 12.500q5 8 1 18" stroke="#201a1a" strokeWidth="2" />
        <path d="M20 17.500v10M15 22.500h10" stroke="#201a1a" strokeWidth="1.800" />
        <path d="M33 14.500l4 7M36 19.500l4-5" stroke="#201a1a" strokeWidth="2.600" />
        <circle cx="48" cy="26" r="14" fill="#ff9552" />
        <path d="M43 12.500q9-3 15 3.500a14 14 0 1 1-22 3" stroke="#201a1a" strokeWidth="2.800" />
        <circle cx="48" cy="26" r="5" fill="#201a1a" />
      </svg>
      <div className="w-[82px] font-['Liberation_Serif','Noto_Sans_CJK_SC',serif] whitespace-nowrap">
        <div className="text-lg leading-5">单机100网</div>
        <div className="text-[15px] leading-5">danji100.com</div>
      </div>
    </div>
  );
}

function RedArrows() {
  return (
    <svg
      width="180"
      height="120"
      viewBox="360 115 180 120"
      fill="#f90505"
      className="absolute left-[360px] top-[115px] z-20 pointer-events-none drop-shadow-[2px_3px_2px_rgba(0,0,0,0.5)]"
      aria-hidden="true"
    >
      <path d="M369 172.500L414 136M399 227.500L509 137" stroke="#f90505" strokeWidth="2.800" strokeLinecap="round" />
      <path d="M429 122.500L405 134l6 4 3 7z" />
      <path d="M525 122.500L501 134.500l6 4 3 6.500z" />
    </svg>
  );
}

export default function App() {
  return (
    <div className="relative flex flex-col min-h-screen bg-white font-['Liberation_Sans','Noto_Sans_CJK_SC',sans-serif]">
      <TitleBar />
      <MenuBar />
      <Toolbar />
      <div className="flex flex-1">
        <Sidebar />
        <Canvas />
      </div>
      <StatusBar />
      <ColorPopover />
      <RedArrows />
      <Watermark />
    </div>
  );
}
